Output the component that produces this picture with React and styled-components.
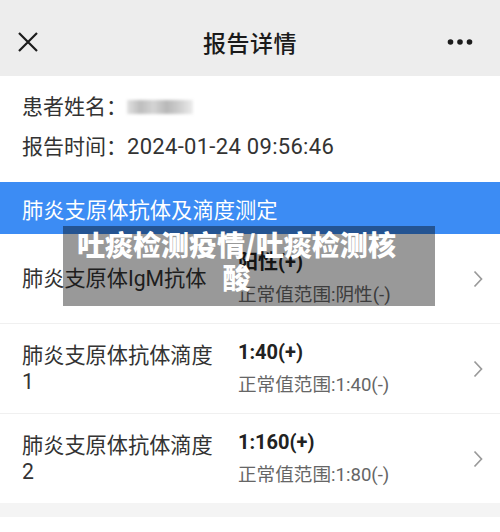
import React from "react";
import styled, { createGlobalStyle } from "styled-components";

const GlobalStyle = createGlobalStyle`
    body {
        margin: 0;
        background: #fff;
        font-family: Roboto, "Noto Sans CJK SC", sans-serif;
    }
`

const items = [
    { name: ["肺炎支原体IgM抗体"], value: "阳性(+)", range: "正常值范围:阴性(-)" },
    { name: ["肺炎支原体抗体滴度", "1"], value: "1:40(+)", range: "正常值范围:1:40(-)" },
    { name: ["肺炎支原体抗体滴度", "2"], value: "1:160(+)", range: "正常值范围:1:80(-)" },
]

function CloseIcon(){
    return(
        <svg width="22" height="22" viewBox="0 0 22 22">
            <path d="M2 2 L20 20 M20 2 L2 20" stroke="#1c1c1c" strokeWidth="2.2" fill="none"/>
        </svg>
    )
}

function MoreIcon(){
    return(
        <svg width="26" height="8" viewBox="0 0 26 8">
            <circle cx="3.5" cy="4" r="2.8" fill="#1c1c1c"/>
            <circle cx="13" cy="4" r="2.8" fill="#1c1c1c"/>
            <circle cx="22.5" cy="4" r="2.8" fill="#1c1c1c"/>
        </svg>
    )
}

function Chevron(){
    return(
        <svg width="10" height="18" viewBox="0 0 10 18">
            <path d="M1.5 1.5 L8.5 9 L1.5 16.5" stroke="#9a9a9a" strokeWidth="1.7" fill="none"/>
        </svg>
    )
}

export default function App(){
    return(
        <Page>
            <GlobalStyle/>
            <Header>
                <HeaderButton><CloseIcon/></HeaderButton>
                <Title>报告详情</Title>
                <HeaderButton right><MoreIcon/></HeaderButton>
            </Header>
            <Info>
                <InfoLine>
                    患者姓名：
                    <Blurred/>
                </InfoLine>
                <InfoLine>报告时间：<DateText>2024-01-24 09:56:46</DateText></InfoLine>
            </Info>
            <SectionBar>肺炎支原体抗体及滴度测定</SectionBar>
            <List>
                {items.map((item, i) => (
                    <Row key={i}>
                        <Label>
                            {item.name.map((line, j) => <div key={j}>{line}</div>)}
                        </Label>
                        <Result>
                            <Value>{item.value}</Value>
                            <Range>{item.range}</Range>
                        </Result>
                        <Chevron/>
                    </Row>
                ))}
            </List>
            <Band/>
            <Overlay>吐痰检测疫情/吐痰检测核酸</Overlay>
        </Page>
    )
}

const Page = styled.div`
    position: relative;
    width: 500px;
    height: 532px;
    overflow: hidden;
    background: #fff;
`
const Header = styled.div`
    height: 76px;
    background-color: #ededed;
    display: grid;
    grid-template-columns: 1fr auto 1fr;
    align-items: center;
    padding: 0 17px;
    box-sizing: border-box;
`
const HeaderButton = styled.div`
    display: flex;
    justify-content: ${p => p.right ? "flex-end" : "flex-start"};
    align-items: center;
    margin-top: 8px;
    margin-right: ${p => p.right ? "10px" : "0"};
`
const Title = styled.div`
    font-size: 23px;
    font-weight: 500;
    color: #1a1a1a;
    margin-top: 8px;
    letter-spacing: 0.5px;
`
const Info = styled.div`
    height: 106px;
    padding: 16px 22px 0;
    box-sizing: border-box;
    display: flex;
    flex-direction: column;
    gap: 10px;
`
const InfoLine = styled.div`
    display: flex;
    align-items: center;
    font-size: 21px;
    line-height: 30px;
    color: #333;
`
const DateText = styled.span`
    font-size: 22px;
    letter-spacing: 0.3px;
`
const Blurred = styled.span`
    display: inline-block;
    width: 66px;
    height: 14px;
    background: linear-gradient(90deg, #e2e2e2 0%, #bdbdbd 20%, #d4d4d4 40%, #b8b8b8 60%, #cfcfcf 80%, #ededed 100%);
    filter: blur(1.5px);
`
const SectionBar = styled.div`
    height: 52px;
    background-color: #3c8cf4;
    color: #fff;
    font-size: 21.3px;
    display: flex;
    align-items: center;
    padding-left: 22px;
`
const List = styled.div`
    display: flex;
    flex-direction: column;
`
const Row = styled.div`
    height: 89px;
    display: flex;
    align-items: center;
    padding: 0 17px 0 22px;
    border-bottom: 1px solid #f0f0f0;
    &:last-child {
        border-bottom: none;
    }
`
const Label = styled.div`
    width: 216px;
    font-size: 21.2px;
    line-height: 26px;
    color: #333;
`
const Result = styled.div`
    flex: 1;
    display: flex;
    flex-direction: column;
    gap: 6px;
    margin-top: -1px;
`
const Value = styled.div`
    font-size: 20px;
    font-weight: 700;
    color: #222;
    line-height: 28px;
`
const Range = styled.div`
    font-size: 18.6px;
    color: #666;
    line-height: 26px;
`
const Band = styled.div`
    height: 14px;
    background: #f4f4f4;
`
const Overlay = styled.div`
    position: absolute;
    left: 63px;
    top: 226px;
    width: 372px;
    height: 80px;
    box-sizing: border-box;
    padding: 2px 29px 0 4px;
    background: rgba(0, 0, 0, 0.4);
    color: #fff;
    font-family: "Noto Sans CJK SC", sans-serif;
    font-size: 28px;
    font-weight: 900;
    line-height: 33px;
    text-align: center;
`
